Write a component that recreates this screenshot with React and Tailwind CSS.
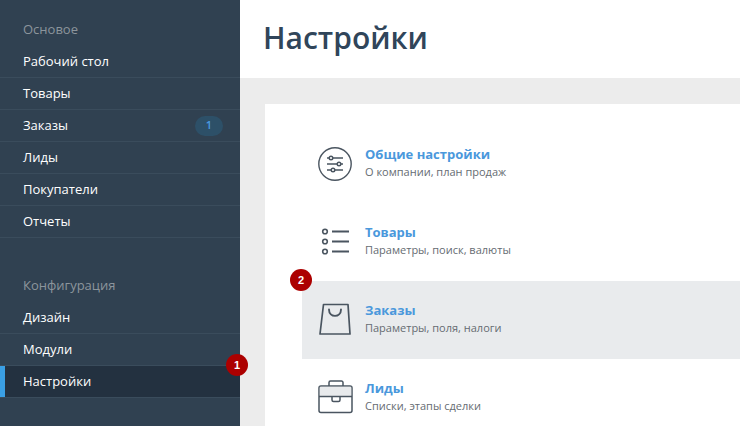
function Row({ label, badge, active, mark }) {
  return (
    <div className={`relative h-8 flex items-center border-b border-[#3a4c5c] pl-[23px] pr-[17px] text-[13px] font-medium text-white ${active ? "bg-[#233140]" : ""}`}>
      {active && <div className="absolute left-0 top-0 bottom-0 w-[5px] bg-[#3a9fe4]" />}
      <span className="flex-1">{label}</span>
      {badge && <span className="w-7 h-5 rounded-full bg-[#2d5068] text-[#4a9be0] text-[11px] flex items-center justify-center font-semibold">{badge}</span>}
      {mark}
    </div>
  );
}
function Num({ n, className }) {
  return <div className={`absolute w-[22px] h-[22px] rounded-full bg-[#ac0000] text-white text-[11px] font-bold flex items-center justify-center font-['Liberation_Sans',sans-serif] ${className}`}>{n}</div>;
}
const S = "#4a5560";
function Sliders() {
  return (
    <svg width="36" height="36" viewBox="0 0 36 36" fill="none" stroke={S} strokeWidth="1.4">
      <circle cx="17" cy="18" r="16.2" />
      <path d="M9 12h16M9 18h16M9 24h16" />
      <circle cx="13" cy="12" r="1.8" fill="#fff" />
      <circle cx="21" cy="18" r="1.8" fill="#fff" />
      <circle cx="15" cy="24" r="1.8" fill="#fff" />
    </svg>
  );
}
function List() {
  return (
    <svg width="36" height="36" viewBox="0 0 36 36" fill="none" stroke={S} strokeWidth="1.6">
      <circle cx="7" cy="7.5" r="2.3" />
      <circle cx="7" cy="17.5" r="2.3" />
      <circle cx="7" cy="27.5" r="2.3" />
      <path d="M14 7.5h17M14 17.5h17M14 27.5h17" strokeWidth="1.8" />
    </svg>
  );
}
function Bag() {
  return (
    <svg width="36" height="36" viewBox="0 0 36 36" fill="none" stroke={S} strokeWidth="1.7" strokeLinejoin="round">
      <path d="M5.5 2.5h24.5l2 29.5h-30z" />
      <path d="M11 7.5c0 8.5 12 8.5 12 0" strokeLinecap="round" strokeWidth="1.9" />
    </svg>
  );
}
function Case() {
  return (
    <svg width="36" height="36" viewBox="0 0 36 36" fill="none" stroke={S} strokeWidth="1.5" strokeLinejoin="round">
      <rect x="1" y="6" width="33" height="26.5" rx="2" />
      <rect x="1.8" y="6.8" width="31.4" height="9" fill="#e8eaec" stroke="none" />
      <path d="M1 16.5h33" />
      <path d="M11 6V2.5A1.5 1.5 0 0 1 12.5 1h11A1.5 1.5 0 0 1 25 2.5V6" />
      <path d="M14 16.5v3.5a1.5 1.5 0 0 0 1.5 1.5h5a1.5 1.5 0 0 0 1.5-1.5v-3.5" />
    </svg>
  );
}
function Item({ icon, title, sub, active, mark }) {
  return (
    <div className={`relative h-[78px] shrink-0 flex items-center pl-[16px] ${active ? "bg-[#e9ebed]" : ""}`}>
      {mark}
      <div className="w-[47px] flex justify-start -mt-[1px]">{icon}</div>
      <div className="flex flex-col -mt-[2px]">
        <span className="text-[13px] leading-[18px] font-bold text-[#4a98dc]">{title}</span>
        <span className="text-[11px] leading-[18px] text-[#666c72]">{sub}</span>
      </div>
    </div>
  );
}
export default function App() {
  return (
    <div className="w-[740px] h-[426px] overflow-hidden flex font-['Open_Sans',sans-serif]">
      <aside className="w-[240px] h-full shrink-0 bg-[#304151] pt-[14px] relative z-10">
        <div className="h-[32px] pl-[23px] flex items-center text-[13px] text-[#8c959c]">Основое</div>
        <Row label="Рабочий стол" />
        <Row label="Товары" />
        <Row label="Заказы" badge="1" />
        <Row label="Лиды" />
        <Row label="Покупатели" />
        <Row label="Отчеты" />
        <div className="h-[32px]" />
        <div className="h-[32px] pl-[23px] flex items-center text-[13px] text-[#8c959c]">Конфигурация</div>
        <Row label="Дизайн" />
        <Row label="Модули" />
        <Row label="Настройки" active mark={<Num n="1" className="left-[226px] top-[-12px]" />} />
      </aside>
      <main className="flex-1 min-w-0 flex flex-col">
        <header className="h-[78px] shrink-0 bg-white pl-[23px] flex items-center">
          <h1 className="text-[30px] font-semibold text-[#30455a] -mt-[3px]">Настройки</h1>
        </header>
        <div className="flex-1 min-h-0 bg-[#ececec] pl-[25px] pt-[26px] overflow-hidden">
          <div className="bg-white h-[400px] pl-[37px] pt-[21px] flex flex-col">
            <Item icon={<Sliders />} title="Общие настройки" sub="О компании, план продаж" />
            <Item icon={<List />} title="Товары" sub="Параметры, поиск, валюты" />
            <Item icon={<Bag />} title="Заказы" sub="Параметры, поля, налоги" active mark={<Num n="2" className="left-[-12px] top-[-12px]" />} />
            <Item icon={<Case />} title="Лиды" sub="Списки, этапы сделки" />
          </div>
        </div>
      </main>
    </div>
  );
}
